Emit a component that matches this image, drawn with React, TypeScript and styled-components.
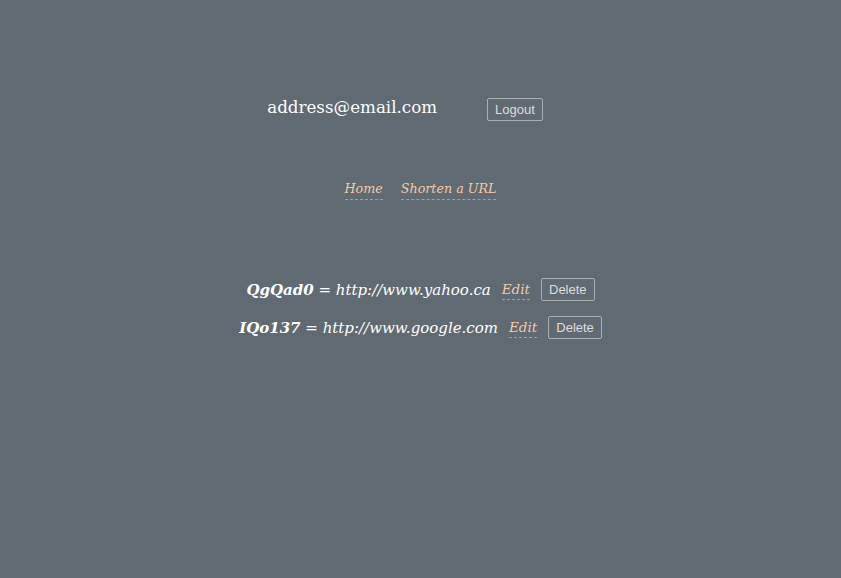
import React from "react";
import styled, { createGlobalStyle } from "styled-components";

const Global = createGlobalStyle`
  html, body { margin: 0; padding: 0; background: #5f6a72; }
  body { font-family: "DejaVu Serif", Georgia, serif; color: #fff; }
`;

const Page = styled.div`
  width: 841px;
  min-height: 578px;
  display: flex;
  flex-direction: column;
  align-items: center;
  padding-top: 98px;
  box-sizing: border-box;
`;

const Header = styled.div`
  display: flex;
  align-items: center;
  gap: 50px;
  margin-right: 31px;
`;

const Email = styled.span`
  font-size: 16.7px;
  color: #fff;
  position: relative;
  top: -3px;
`;

const Button = styled.button`
  font-family: "Liberation Sans", Arial, sans-serif;
  font-size: 13px;
  color: #ddd;
  background: transparent;
  border: 1px solid #a9aeb2;
  border-radius: 2px;
  height: 23px;
  padding: 0 7px;
  line-height: 21px;
  cursor: pointer;
`;

const Nav = styled.nav`
  display: flex;
  gap: 18px;
  margin-top: 60px;
`;

const Link = styled.a`
  font-style: italic;
  font-size: 12.7px;
  color: #f4c9a6;
  text-decoration: none;
  border-bottom: 1px dashed #9aa0a6;
  padding-bottom: 3px;
`;

const List = styled.div`
  display: flex;
  flex-direction: column;
  align-items: center;
  gap: 15px;
  margin-top: 78px;
`;

const Row = styled.div`
  display: flex;
  align-items: center;
`;

const Entry = styled.span`
  font-size: 15px;
  font-style: italic;
  color: #fff;
  margin-right: 11px;
`;

const Code = styled.b`
  font-weight: bold;
`;

const EditLink = styled(Link)`
  font-size: 13.5px;
  margin-right: 11px;
  padding-bottom: 2px;
  position: relative;
  top: 1px;
`;

const rows = [
  { code: "QgQad0", url: "http://www.yahoo.ca" },
  { code: "IQo137", url: "http://www.google.com" },
];

export default function App() {
  return (
    <>
      <Global />
      <Page>
        <Header>
          <Email>address@email.com</Email>
          <Button>Logout</Button>
        </Header>
        <Nav>
          <Link href="#">Home</Link>
          <Link href="#">Shorten a URL</Link>
        </Nav>
        <List>
          {rows.map((r) => (
            <Row key={r.code}>
              <Entry>
                <Code>{r.code}</Code> = {r.url}
              </Entry>
              <EditLink href="#">Edit</EditLink>
              <Button>Delete</Button>
            </Row>
          ))}
        </List>
      </Page>
    </>
  );
}
